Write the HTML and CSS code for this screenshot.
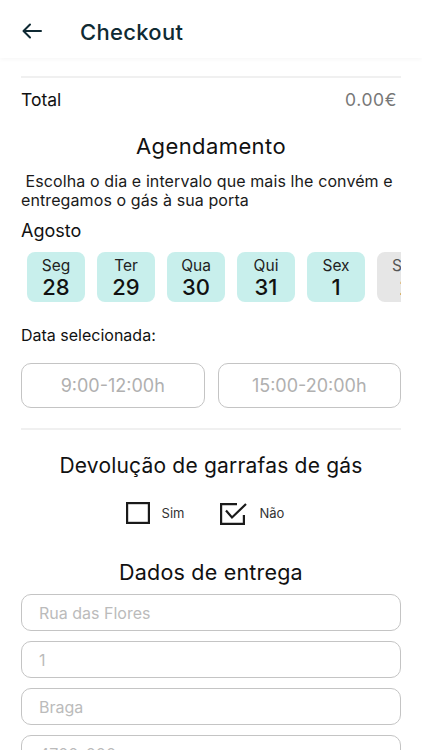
FILE: index.html
```html
<!DOCTYPE html>
<html lang="pt">

<head>
    <meta charset="UTF-8">
    <meta name="viewport" content="width=device-width, initial-scale=1.0">
    <title>Checkout</title>
    <link rel="stylesheet" href="styles.css">
</head>

<body>
    <header class="topbar">
        <button class="back-btn" aria-label="Voltar">
            <svg width="20" height="16" viewBox="0 0 20 16" fill="none" stroke="#0f2a33" stroke-width="2" stroke-linecap="round" stroke-linejoin="round">
                <path d="M19 8H2"/>
                <path d="M8 1.5L1.5 8L8 14.5"/>
            </svg>
        </button>
        <h1 class="title">Checkout</h1>
    </header>

    <main class="content">
        <div class="total-row">
            <span>Total</span>
            <span class="total-value">0.00€</span>
        </div>

        <h2 class="section-title">Agendamento</h2>
        <p class="intro">&nbsp;Escolha o dia e intervalo que mais lhe convém e entregamos o gás à sua porta</p>

        <div class="month">Agosto</div>
        <div class="days">
            <div class="day"><span class="day-name">Seg</span><span class="day-num">28</span></div>
            <div class="day"><span class="day-name">Ter</span><span class="day-num">29</span></div>
            <div class="day"><span class="day-name">Qua</span><span class="day-num">30</span></div>
            <div class="day"><span class="day-name">Qui</span><span class="day-num">31</span></div>
            <div class="day"><span class="day-name">Sex</span><span class="day-num">1</span></div>
            <div class="day day-off"><span class="day-name">Sáb</span><span class="day-num">2</span></div>
        </div>

        <div class="selected-label">Data selecionada:</div>
        <div class="slots">
            <button class="slot">9:00-12:00h</button>
            <button class="slot">15:00-20:00h</button>
        </div>

        <h2 class="section-title return-title">Devolução de garrafas de gás</h2>
        <div class="options">
            <label class="option">
                <svg width="24" height="22" viewBox="0 0 24 22" fill="none" stroke="#1a1a1a" stroke-width="2.2">
                    <rect x="1.1" y="1.1" width="21.8" height="19.8"/>
                </svg>
                <span>Sim</span>
            </label>
            <label class="option">
                <svg width="28" height="24" viewBox="0 0 28 24" fill="none" stroke="#1a1a1a" stroke-width="2.2">
                    <path d="M17 3.1H1.1V22.9H23.9V14"/>
                    <path d="M6 9.5L12 16.5L26 3" stroke-linejoin="miter"/>
                </svg>
                <span>Não</span>
            </label>
        </div>

        <h2 class="section-title delivery-title">Dados de entrega</h2>
        <div class="fields">
            <input class="field" type="text" placeholder="Rua das Flores">
            <input class="field" type="text" placeholder="1">
            <input class="field" type="text" placeholder="Braga">
            <input class="field" type="text" placeholder="4700-000">
        </div>
    </main>
</body>

</html>
```

FILE: styles.css
```css
body {
    margin: 0;
    background-color: #ffffff;
    color: #111111;
    font-family: Inter, 'Liberation Sans', sans-serif;
    overflow: hidden;
}

.topbar {
    height: 58px;
    display: flex;
    align-items: center;
    padding: 0 22px;
    box-shadow: 0 2px 4px rgba(0, 0, 0, 0.03);
}

.back-btn {
    background: none;
    border: none;
    padding: 0;
    display: flex;
    margin-top: 3px;
    cursor: pointer;
}

.title {
    margin: 6px 0 0 38px;
    font-size: 22px;
    font-weight: 500;
    color: #0f2a33;
    letter-spacing: 0.3px;
}

.content {
    padding: 18px 21px 0;
}

.total-row {
    display: flex;
    justify-content: space-between;
    align-items: center;
    border-top: 2px solid #f0f0f0;
    padding: 11px 4px 0 0;
    font-size: 17.5px;
}

.total-value {
    color: #777777;
    letter-spacing: 0.6px;
}

.section-title {
    margin: 23px 0 0;
    text-align: center;
    font-size: 22px;
    font-weight: 400;
    letter-spacing: 0.4px;
}

.intro {
    margin: 13px 0 0;
    font-size: 16px;
    line-height: 19px;
    letter-spacing: 0.1px;
    color: #1a1a1a;
}

.month {
    margin-top: 10px;
    font-size: 18px;
}

.days {
    display: flex;
    gap: 12px;
    margin-top: 11px;
    padding-left: 6px;
    overflow: hidden;
}

.day {
    flex: 0 0 58px;
    height: 50px;
    border-radius: 8px;
    background-color: #c8efec;
    display: flex;
    flex-direction: column;
    align-items: center;
    padding-top: 4px;
    box-sizing: border-box;
}

.day-off {
    background-color: #e6e6e6;
}

.day-off .day-name {
    color: #555555;
}

.day-name {
    font-size: 15.5px;
    color: #222222;
}

.day-num {
    font-size: 22px;
    line-height: 24px;
    font-weight: 500;
}

.selected-label {
    margin-top: 23px;
    font-size: 16px;
}

.slots {
    display: flex;
    gap: 13px;
    margin-top: 18px;
    padding-bottom: 20px;
    border-bottom: 2px solid #f0f0f0;
}

.slot {
    flex: 1;
    height: 45px;
    border: 1px solid #c4c4c4;
    border-radius: 10px;
    background: #ffffff;
    font-family: inherit;
    font-size: 18px;
    color: #b0b0b0;
}

.return-title {
    margin-top: 23px;
    font-size: 21px;
    letter-spacing: 0.2px;
}

.options {
    display: flex;
    justify-content: center;
    gap: 35px;
    margin-top: 23px;
    padding-right: 12px;
}

.option {
    display: flex;
    align-items: center;
    gap: 12px;
    font-size: 13px;
    color: #333333;
}

.delivery-title {
    margin-top: 34px;
    font-size: 21.5px;
    letter-spacing: 0.2px;
}

.fields {
    display: flex;
    flex-direction: column;
    gap: 10px;
    margin-top: 9px;
}

.field {
    box-sizing: border-box;
    height: 37px;
    border: 1px solid #c4c4c4;
    border-radius: 10px;
    padding: 0 17px;
    font-family: inherit;
    font-size: 16px;
    color: #333333;
    outline: none;
}

.field::placeholder {
    color: #bbbbbb;
}
```
